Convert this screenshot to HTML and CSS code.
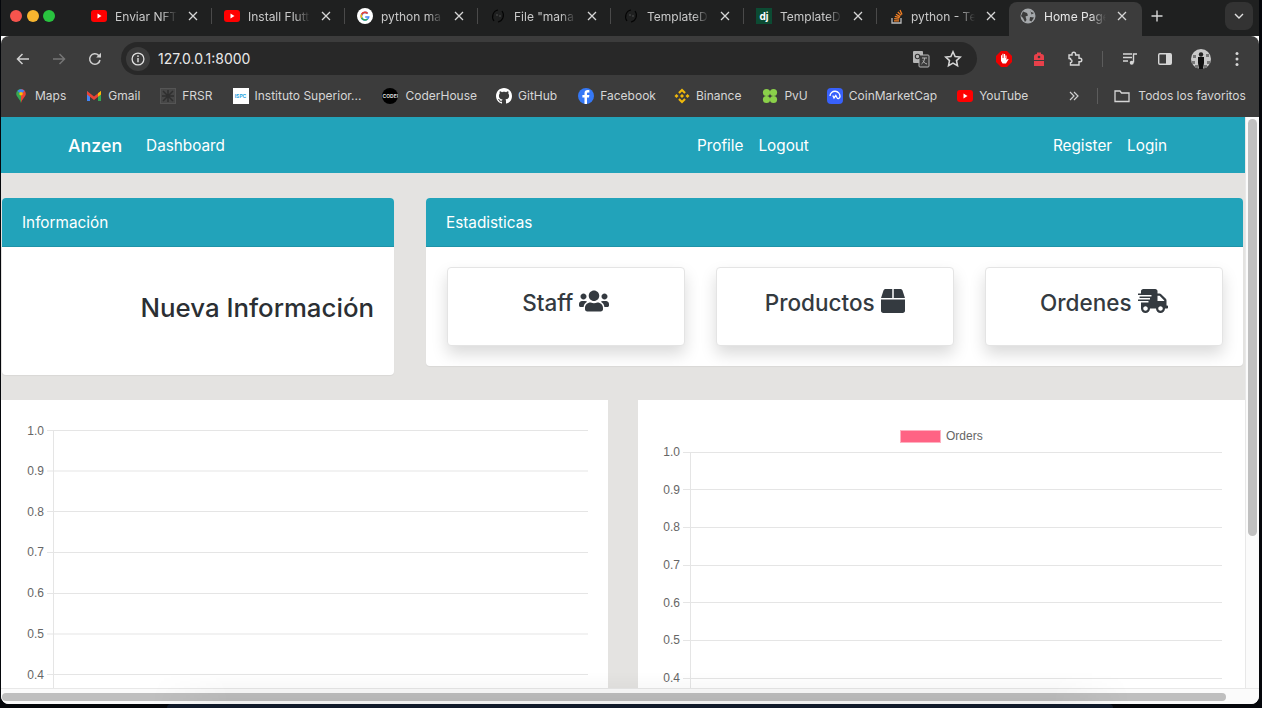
FILE: index.html
```html
<!DOCTYPE html>
<html lang="es">
<head>
    <meta charset="UTF-8">
    <title>Home Page</title>
    <link rel="stylesheet" href="styles.css">
</head>
<body>

<svg class="defs" width="0" height="0">
    <symbol id="yt" viewBox="0 0 16 16"><rect y="2" width="16" height="12" rx="3" fill="#f00"/><path d="M6.5 5.5l4 2.5-4 2.5z" fill="#fff"/></symbol>
    <symbol id="x" viewBox="0 0 10 10"><path d="M1 1l8 8M9 1l-8 8" stroke="#d6d6d6" stroke-width="1.3" fill="none"/></symbol>
    <symbol id="ring" viewBox="0 0 16 16"><path d="M4 13C1 9 3 3 8 2M12 3c3 4 1 10-4 11" stroke="#050505" stroke-width="1.2" fill="none"/><circle cx="7" cy="7" r=".8" fill="#555"/><circle cx="10" cy="8" r=".8" fill="#555"/></symbol>
</svg>

<div class="window">

    <div class="tabstrip">
        <div class="lights">
            <span class="light red"></span>
            <span class="light yellow"></span>
            <span class="light green"></span>
        </div>
        <div class="tab">
            <svg class="fav"><use href="#yt"/></svg>
            <span class="tab-title">Enviar NFT</span>
            <svg class="tab-x"><use href="#x"/></svg>
        </div>
        <div class="tab">
            <svg class="fav"><use href="#yt"/></svg>
            <span class="tab-title">Install Flutt</span>
            <svg class="tab-x"><use href="#x"/></svg>
        </div>
        <div class="tab">
            <svg class="fav" viewBox="0 0 16 16"><circle cx="8" cy="8" r="8" fill="#fff"/><path d="M12.6 8.2H8.2v1.6h2.6a2.9 2.9 0 1 1-.8-3.7l1.2-1.2A4.6 4.6 0 1 0 12.6 8.2z" fill="#4285f4"/><path d="M3.9 6l1.4 1a2.9 2.9 0 0 1 4.7-.9l1.2-1.2A4.6 4.6 0 0 0 3.9 6z" fill="#ea4335"/><path d="M3.9 10.2l1.4-1a2.9 2.9 0 0 0 4.4 1.4l1.1 1.1a4.6 4.6 0 0 1-6.9-1.5z" fill="#34a853"/><path d="M3.9 6a4.6 4.6 0 0 0 0 4.2l1.4-1a2.9 2.9 0 0 1 0-2.2z" fill="#fbbc05"/></svg>
            <span class="tab-title">python ma</span>
            <svg class="tab-x"><use href="#x"/></svg>
        </div>
        <div class="tab">
            <svg class="fav"><use href="#ring"/></svg>
            <span class="tab-title">File "mana</span>
            <svg class="tab-x"><use href="#x"/></svg>
        </div>
        <div class="tab">
            <svg class="fav"><use href="#ring"/></svg>
            <span class="tab-title">TemplateD</span>
            <svg class="tab-x"><use href="#x"/></svg>
        </div>
        <div class="tab">
            <span class="fav dj">dj</span>
            <span class="tab-title">TemplateD</span>
            <svg class="tab-x"><use href="#x"/></svg>
        </div>
        <div class="tab tab-so">
            <svg class="fav" viewBox="0 0 16 16"><path d="M3 10v5h9v-5" stroke="#bcbbbb" stroke-width="1.3" fill="none"/><path d="M5 12.8h5M5.2 10.6l5 .5M5.8 8.4l4.8 1.3M7 6.2l4.2 2.4M8.8 4l3.4 3.4M11 2l2 4.4" stroke="#f48024" stroke-width="1.3" fill="none"/></svg>
            <span class="tab-title">python - Te</span>
            <svg class="tab-x"><use href="#x"/></svg>
        </div>
        <div class="tab active">
            <svg class="fav" viewBox="0 0 16 16"><circle cx="8" cy="8" r="7.5" fill="#a5a8ab"/><path d="M3 3.5l4 1.5 1 2.5-2.5 1 1 3.5-1.5 2-2-4-2-2zM10 1.5l1 2.5 3 1-2.5 1.5zM10 9l4 .5-2.5 4-2-1z" fill="#3c3c3c"/></svg>
            <span class="tab-title">Home Page</span>
            <svg class="tab-x"><use href="#x"/></svg>
        </div>
        <svg class="new-tab" viewBox="0 0 12 12"><path d="M6 .5v11M.5 6h11" stroke="#d6d6d6" stroke-width="1.4"/></svg>
        <div class="tab-menu">
            <svg width="10" height="6" viewBox="0 0 10 6"><path d="M1 1l4 4 4-4" stroke="#e0e0e0" stroke-width="1.4" fill="none"/></svg>
        </div>
    </div>

    <div class="toolbar">
        <svg class="tool-icon" viewBox="0 0 16 16"><path d="M14 8H2.5M7.5 3l-5 5 5 5" stroke="#d0d0d0" stroke-width="1.5" fill="none"/></svg>
        <svg class="tool-icon" viewBox="0 0 16 16"><path d="M2 8h11.5M8.5 3l5 5-5 5" stroke="#757575" stroke-width="1.5" fill="none"/></svg>
        <svg class="tool-icon" viewBox="0 0 16 16"><path d="M13 9a5.2 5.2 0 1 1-1.4-4.6L13.5 6" stroke="#d0d0d0" stroke-width="1.5" fill="none"/><path d="M14 1.8V6.6H9.2z" fill="#d0d0d0"/></svg>
        <div class="address">
            <span class="info-chip">
                <svg width="14" height="14" viewBox="0 0 14 14"><circle cx="7" cy="7" r="5.9" stroke="#e0e0e0" stroke-width="1.3" fill="none"/><path d="M7 6v4.2" stroke="#e0e0e0" stroke-width="1.4"/><circle cx="7" cy="4.1" r=".9" fill="#e0e0e0"/></svg>
            </span>
            <span class="url">127.0.0.1:8000</span>
            <svg class="addr-icon translate" viewBox="0 0 18 18"><rect x="1" y="1" width="10" height="12" rx="1" fill="#b5b5b5"/><rect x="7" y="5" width="10" height="12" rx="1" fill="#3a3a3a" stroke="#b5b5b5"/><path d="M10 8h5M12.5 8c0 3-1.5 5-3 6M11 10.5c1 2 2 3 4 3.5" stroke="#b5b5b5" fill="none"/><circle cx="5.5" cy="6.5" r="2.2" stroke="#333" stroke-width="1.1" fill="none"/></svg>
            <svg class="addr-icon star" viewBox="0 0 16 16"><path d="M8 1.6l1.9 4.2 4.6.5-3.4 3.1.9 4.6L8 11.7l-4 2.3.9-4.6L1.5 6.3l4.6-.5z" stroke="#d6d6d6" stroke-width="1.4" fill="none"/></svg>
        </div>
        <svg class="ext ext-shield" viewBox="0 0 16 16"><path d="M5 0h6l5 5v6l-5 5H5l-5-5V5z" fill="#e00"/><path d="M5 8V4.2h1V7h.4V2.8h1.1V7H8V3h1.1v4h.4V4.4h1V9l1.3-1.3.8.6L10 12.5H6.6L5 10z" fill="#fff"/></svg>
        <svg class="ext ext-pack" viewBox="0 0 16 16"><path d="M6 3V1.5h4V3h.5A2.5 2.5 0 0 1 13 5.5V9H3V5.5A2.5 2.5 0 0 1 5.5 3z" fill="#e8404a"/><rect x="3" y="10" width="10" height="5" fill="#e8404a"/><circle cx="8" cy="6" r="1.3" fill="#3c3c3c"/></svg>
        <svg class="ext ext-puzzle" viewBox="0 0 16 16"><path d="M2 4h3V3a1.8 1.8 0 0 1 3.6 0v1H12v3.2h1a1.8 1.8 0 0 1 0 3.6h-1V14H3.5v-2.4a1.5 1.5 0 0 0 0-3V7.5H2z" stroke="#d6d6d6" stroke-width="1.4" fill="none"/></svg>
        <span class="tool-sep"></span>
        <svg class="ext ext-music" viewBox="0 0 16 16"><path d="M1 3h9M1 6.5h9M1 10h5" stroke="#d6d6d6" stroke-width="1.4"/><path d="M11.5 11.5V3H15" stroke="#d6d6d6" stroke-width="1.4" fill="none"/><circle cx="9.7" cy="11.7" r="2" fill="#d6d6d6"/></svg>
        <svg class="ext ext-panel" viewBox="0 0 16 16"><rect x="1.7" y="2.7" width="12.6" height="10.6" rx="1.2" stroke="#d6d6d6" stroke-width="1.4" fill="none"/><rect x="9" y="3" width="5" height="10" fill="#d6d6d6"/></svg>
        <svg class="ext ext-avatar" viewBox="0 0 20 20"><circle cx="10" cy="10" r="10" fill="#c9c9c9"/><path d="M2 6h3v3H2zM15 5h3v3h-3zM1 12h3v3H1zM16 12h3v3h-3zM4 16h3v3H4zM13 16h3v3h-3z" fill="#777"/><path d="M7 8h6v6l-1 6H8l-1-6z" fill="#111"/><circle cx="10" cy="5.5" r="2.2" fill="#222"/></svg>
        <svg class="ext ext-dots" viewBox="0 0 4 16"><circle cx="2" cy="2.5" r="1.5" fill="#d6d6d6"/><circle cx="2" cy="8" r="1.5" fill="#d6d6d6"/><circle cx="2" cy="13.5" r="1.5" fill="#d6d6d6"/></svg>
    </div>

    <div class="bookmarks">
        <span class="bm bm-maps">
            <svg class="bm-icon" viewBox="0 0 16 16"><path d="M8 0a5.5 5.5 0 0 1 5.5 5.5C13.500 9 9.500 11 8 16z" fill="#ea4335"/><path d="M8 0a5.500 5.500 0 0 0-5.500 5.500C2.500 9 6.500 11 8 16z" fill="#34a853"/><path d="M4 2a5.500 5.500 0 0 1 8 0L8 6z" fill="#4285f4"/><circle cx="8" cy="5.500" r="2" fill="#fbbc05"/></svg>
            Maps
        </span>
        <span class="bm bm-gmail">
            <svg class="bm-icon" viewBox="0 0 16 16"><path d="M1 3v10h3V7z" fill="#4285f4"/><path d="M15 3v10h-3V7z" fill="#34a853"/><path d="M1 3l7 5.500L15 3v3.500L8 12 1 6.500z" fill="#ea4335"/><path d="M12 5.300L15 3v3.500L12 8.500z" fill="#fbbc05"/></svg>
            Gmail
        </span>
        <span class="bm bm-frsr">
            <svg class="bm-icon" viewBox="0 0 16 16"><rect x=".5" y=".5" width="15" height="15" fill="#474747" stroke="#555"/><path d="M3 3l10 10M13 3L3 13M8 2v12M2 8h12" stroke="#2f2f2f" stroke-width="1.500"/></svg>
            FRSR
        </span>
        <span class="bm bm-ispc">
            <span class="bm-icon ispc">ISPC</span>
            Instituto Superior...
        </span>
        <span class="bm bm-coder">
            <span class="bm-icon coder">CODER</span>
            CoderHouse
        </span>
        <span class="bm bm-github">
            <svg class="bm-icon" viewBox="0 0 16 16"><path fill="#fff" d="M8 0C3.58 0 0 3.58 0 8c0 3.54 2.29 6.530 5.470 7.590.4.070.55-.17.55-.38 0-.19-.01-.82-.01-1.490-2.010.37-2.530-.49-2.690-.94-.09-.23-.48-.94-.82-1.130-.28-.15-.68-.52-.01-.53.63-.01 1.080.58 1.230.82.720 1.210 1.870.87 2.330.66.070-.52.280-.87.510-1.070-1.780-.2-3.640-.89-3.640-3.950 0-.87.310-1.590.820-2.150-.08-.2-.36-1.020.08-2.120 0 0 .67-.21 2.200.82.640-.18 1.320-.27 2-.27s1.360.09 2 .27c1.530-1.040 2.200-.82 2.200-.82.440 1.100.160 1.920.080 2.120.510.560.820 1.270.820 2.150 0 3.070-1.870 3.750-3.650 3.950.290.250.540.730.540 1.480 0 1.070-.01 1.930-.01 2.200 0 .21.150.46.550.38A8.010 8.010 0 0 0 16 8c0-4.420-3.580-8-8-8z"/></svg>
            GitHub
        </span>
        <span class="bm bm-fb">
            <svg class="bm-icon" viewBox="0 0 16 16"><circle cx="8" cy="8" r="8" fill="#3578f6"/><path d="M9 16V9.500h2l.4-2.500H9V5.600c0-.8.3-1.200 1.200-1.200h1.200V2.200C11 2.100 10.300 2 9.700 2 7.800 2 6.500 3.200 6.500 5.200V7H4.400v2.500h2.100V16z" fill="#fff"/></svg>
            Facebook
        </span>
        <span class="bm bm-binance">
            <svg class="bm-icon" viewBox="0 0 16 16"><path d="M8 .5l3.800 3.800-1.500 1.500L8 3.500 5.700 5.800 4.200 4.300zM.5 8l2-2 2 2-2 2zM11.500 8l2-2 2 2-2 2zM8 6l2 2-2 2-2-2zM8 15.500l-3.800-3.800 1.500-1.500L8 12.500l2.300-2.300 1.500 1.500z" fill="#f0b90b"/></svg>
            Binance
        </span>
        <span class="bm bm-pvu">
            <svg class="bm-icon" viewBox="0 0 16 16"><circle cx="4.500" cy="4.500" r="3.600" fill="#8bd14a"/><circle cx="11.500" cy="4.500" r="3.600" fill="#8bd14a"/><circle cx="4.500" cy="11.500" r="3.600" fill="#8bd14a"/><circle cx="11.500" cy="11.500" r="3.600" fill="#8bd14a"/></svg>
            PvU
        </span>
        <span class="bm bm-cmc">
            <svg class="bm-icon" viewBox="0 0 16 16"><rect width="16" height="16" rx="4" fill="#3861fb"/><path d="M3 8a5 5 0 1 1 10 .5c0 2-2.200 2.800-3 1.200L8.800 7.500 7 10 5.800 7.500" stroke="#fff" stroke-width="1.300" fill="none"/></svg>
            CoinMarketCap
        </span>
        <span class="bm bm-yt">
            <svg class="bm-icon"><use href="#yt"/></svg>
            YouTube
        </span>
        <span class="bm-more">
            <svg width="10" height="10" viewBox="0 0 10 10"><path d="M1 1l4 4-4 4M5 1l4 4-4 4" stroke="#d0d0d0" stroke-width="1.200" fill="none"/></svg>
        </span>
        <span class="bm-sep"></span>
        <span class="bm bm-all">
            <svg class="bm-icon" viewBox="0 0 16 16"><path d="M1 13.500V3h5l1.500 2H15v8.500z" stroke="#d6d6d6" stroke-width="1.300" fill="none"/></svg>
            Todos los favoritos
        </span>
    </div>

    <div class="browser-body">
        <div class="viewport">
            <nav class="navbar">
                <a class="brand">Anzen</a>
                <a class="nav-link">Dashboard</a>
                <div class="nav-group nav-center">
                    <a class="nav-link">Profile</a>
                    <a class="nav-link">Logout</a>
                </div>
                <div class="nav-group nav-right">
                    <a class="nav-link">Register</a>
                    <a class="nav-link">Login</a>
                </div>
            </nav>

            <div class="top-row">
                <section class="card card-info">
                    <header class="card-header">Información</header>
                    <div class="card-body info-body">
                        <h3 class="info-title">Nueva Información</h3>
                    </div>
                </section>

                <section class="card">
                    <header class="card-header">Estadisticas</header>
                    <div class="card-body stats-body">
                        <div class="stat">
                            Staff
                            <svg class="stat-icon users" viewBox="0 0 640 512"><path d="M96 224c35.300 0 64-28.700 64-64s-28.700-64-64-64-64 28.700-64 64 28.700 64 64 64zm448 0c35.300 0 64-28.700 64-64s-28.700-64-64-64-64 28.700-64 64 28.700 64 64 64zm32 32h-64c-17.600 0-33.500 7.100-45.100 18.600 40.300 22.100 68.900 62 75.100 109.400h66c17.700 0 32-14.300 32-32v-32c0-35.300-28.700-64-64-64zm-256 0c61.900 0 112-50.100 112-112S381.900 32 320 32 208 82.100 208 144s50.100 112 112 112zm76.800 32h-8.300c-20.800 10-43.900 16-68.500 16s-47.600-6-68.500-16h-8.300C179.600 288 128 339.600 128 403.200V432c0 26.500 21.500 48 48 48h288c26.500 0 48-21.500 48-48v-28.800c0-63.600-51.600-115.200-115.200-115.200zm-223.700-13.400C161.500 263.100 145.600 256 128 256H64c-35.300 0-64 28.700-64 64v32c0 17.700 14.300 32 32 32h65.900c6.300-47.400 34.900-87.300 75.200-109.400z"/></svg>
                        </div>
                        <div class="stat">
                            Productos
                            <svg class="stat-icon box" viewBox="0 0 512 512"><path d="M509.500 184.600L458.900 32.800C452.400 13.200 434.100 0 413.400 0H272v192h238.700c-.4-2.500-.4-5-1.200-7.400zM240 0H98.600c-20.700 0-39 13.200-45.500 32.800L2.500 184.600c-.8 2.400-.8 4.900-1.200 7.400H240V0zM0 224v240c0 26.500 21.500 48 48 48h416c26.500 0 48-21.500 48-48V224H0z"/></svg>
                        </div>
                        <div class="stat">
                            Ordenes
                            <svg class="stat-icon truck" viewBox="0 0 640 512"><path d="M624 352h-16V243.900c0-12.700-5.100-24.900-14.100-33.900L494 110.100c-9-9-21.200-14.100-33.900-14.100H416V48c0-26.500-21.500-48-48-48H112C85.500 0 64 21.500 64 48v48H8c-4.400 0-8 3.600-8 8v16c0 4.400 3.600 8 8 8h272c4.400 0 8 3.600 8 8v16c0 4.400-3.600 8-8 8H40c-4.400 0-8 3.600-8 8v16c0 4.400 3.600 8 8 8h208c4.400 0 8 3.600 8 8v16c0 4.400-3.600 8-8 8H8c-4.400 0-8 3.600-8 8v16c0 4.400 3.600 8 8 8h208c4.400 0 8 3.600 8 8v16c0 4.400-3.600 8-8 8H64v128c0 53 43 96 96 96s96-43 96-96h128c0 53 43 96 96 96s96-43 96-96h48c8.800 0 16-7.200 16-16v-32c0-8.800-7.200-16-16-16zM160 464c-26.500 0-48-21.500-48-48s21.500-48 48-48 48 21.500 48 48-21.500 48-48 48zm320 0c-26.500 0-48-21.500-48-48s21.500-48 48-48 48 21.500 48 48-21.500 48-48 48zm80-208H416V144h44.100l99.900 99.900V256z"/></svg>
                        </div>
                    </div>
                </section>
            </div>

            <div class="chart-row">
                <div class="chart-panel">
                    <svg class="chart" width="607" height="300" viewBox="0 0 607 300">
                        <g class="grid">
                            <path d="M46 30.500H587M46 71H587M46 111.500H587M46 152.500H587M46 193.500H587M46 234H587M46 274.500H587M52.500 30V300"/>
                        </g>
                        <g class="ticks">
                            <text x="43" y="34.500">1.0</text>
                            <text x="43" y="75">0.9</text>
                            <text x="43" y="116">0.8</text>
                            <text x="43" y="156">0.7</text>
                            <text x="43" y="197">0.6</text>
                            <text x="43" y="238">0.5</text>
                            <text x="43" y="279">0.4</text>
                        </g>
                    </svg>
                </div>
                <div class="chart-panel">
                    <svg class="chart" width="607" height="300" viewBox="0 0 607 300">
                        <rect class="legend-box" x="262.500" y="30.500" width="40" height="12"/>
                        <text class="legend-text" x="308" y="40">Orders</text>
                        <g class="grid">
                            <path d="M45 52.500H584M45 89.500H584M45 127.500H584M45 165.500H584M45 202.500H584M45 240.500H584M45 278.500H584M52.500 52V300"/>
                        </g>
                        <g class="ticks">
                            <text x="42" y="55.500">1.0</text>
                            <text x="42" y="94">0.9</text>
                            <text x="42" y="131">0.8</text>
                            <text x="42" y="169">0.7</text>
                            <text x="42" y="207">0.6</text>
                            <text x="42" y="244">0.5</text>
                            <text x="42" y="282">0.4</text>
                        </g>
                    </svg>
                </div>
            </div>
        </div>
        <div class="vscroll"><span class="vthumb"></span></div>
    </div>

    <div class="hscroll"><span class="hthumb"></span></div>
    <div class="dock-shadow"></div>
</div>

<div class="dock"></div>

</body>
</html>
```

FILE: styles.css
```css
* {
    box-sizing: border-box;
}

html, body {
    height: 100%;
}

body {
    margin: 0;
    overflow: hidden;
    background: #05070b;
    font-family: "Inter", "Liberation Sans", sans-serif;
}

.defs {
    display: block;
    height: 0;
}

.window {
    position: relative;
    width: 1258px;
    height: 704px;
    margin-left: 1px;
    overflow: hidden;
    border-radius: 0 0 8px 8px;
    background: #fbfbfb;
}

.dock {
    width: 946px;
    height: 4px;
    margin-left: 167px;
    border-radius: 4px 4px 0 0;
    background: #101a2a;
}

/* tabs */

.tabstrip {
    display: flex;
    align-items: flex-start;
    height: 36px;
    background: #1f2020;
}

.lights {
    display: flex;
    gap: 4.500px;
    width: 77px;
    margin-top: 10px;
    padding-left: 9px;
}

.light {
    width: 12px;
    height: 12px;
    border-radius: 50%;
}

.red { background: #f5544d; }
.yellow { background: #f7b52f; }
.green { background: #29c33f; }

.tab {
    display: flex;
    align-items: center;
    width: 133px;
    height: 34px;
    margin-top: 2px;
    padding: 0 0 6px 13px;
    color: #c9c9c9;
    font-size: 12px;
    position: relative;
}

.tab::after {
    content: "";
    position: absolute;
    right: -1px;
    top: 6px;
    width: 1px;
    height: 16px;
    background: #4a4a4a;
}

.tab-so::after,
.tab.active::after {
    display: none;
}

.tab.active {
    padding-left: 11px;
    border-radius: 8px 8px 0 0;
    background: #3c3c3c;
    color: #e8e8e8;
}

.fav {
    flex: none;
    width: 16px;
    height: 16px;
    margin-right: 8px;
}

.tab-so .fav {
    margin-right: 6px;
}

.tab-so .tab-title {
    width: 64px;
}

.dj {
    display: block;
    background: #0c4b33;
    color: #fff;
    font-size: 10px;
    font-weight: 700;
    line-height: 16px;
    text-align: center;
}

.tab-title {
    flex: none;
    width: 62px;
    overflow: hidden;
    white-space: nowrap;
    -webkit-mask-image: linear-gradient(to right, #000 75%, transparent);
    mask-image: linear-gradient(to right, #000 75%, transparent);
}

.tab-x {
    flex: none;
    width: 10px;
    height: 10px;
    margin-left: 11px;
}

.new-tab {
    width: 12px;
    height: 12px;
    margin-top: 10px;
    margin-left: 9px;
}

.tab-menu {
    display: flex;
    align-items: center;
    justify-content: center;
    width: 28px;
    height: 28px;
    margin-top: 2px;
    margin-left: 62px;
    border-radius: 8px;
    background: #333;
}

/* toolbar */

.toolbar {
    display: flex;
    align-items: center;
    height: 45px;
    padding-left: 14px;
    background: #3c3c3c;
    border-radius: 8px 8px 0 0;
}

.tool-icon {
    width: 16px;
    height: 16px;
    margin-right: 20px;
}

.tool-icon:nth-child(3) {
    margin-right: 18px;
}

.address {
    display: flex;
    align-items: center;
    width: 856px;
    height: 33px;
    padding-left: 5px;
    border-radius: 17px;
    background: #282828;
}

.info-chip {
    display: flex;
    align-items: center;
    justify-content: center;
    width: 24px;
    height: 24px;
    border-radius: 50%;
    background: #3c3c3c;
}

.url {
    margin-left: 8px;
    color: #e8e8e8;
    font-size: 14px;
}

.addr-icon {
    width: 18px;
    height: 18px;
}

.translate {
    margin-left: auto;
}

.star {
    margin-left: 14px;
    margin-right: 15px;
}

.ext {
    flex: none;
    width: 16px;
    height: 16px;
}

.ext-shield { margin-left: 19px; }
.ext-pack { margin-left: 19px; }
.ext-puzzle { margin-left: 20px; }
.ext-music { margin-left: 19px; }
.ext-panel { margin-left: 19px; }
.ext-avatar { width: 20px; height: 20px; margin-left: 18px; }
.ext-dots { width: 4px; margin-left: 24px; }

.tool-sep {
    width: 1px;
    height: 16px;
    margin-left: 19px;
    background: #5c5c5c;
}

/* bookmarks */

.bookmarks {
    display: flex;
    align-items: center;
    height: 36px;
    padding: 0 0 7px 13px;
    background: #3c3c3c;
    color: #d6d6d6;
    font-size: 12px;
    white-space: nowrap;
}

.bm {
    display: flex;
    align-items: center;
    gap: 6px;
    margin-right: 20px;
}

.bm-icon {
    flex: none;
    width: 16px;
    height: 16px;
}

.bm-maps .bm-icon { width: 14px; margin-right: 1px; }

.bm-coder { margin-left: 1px; margin-right: 19px; gap: 7px; }
.bm-github { margin-right: 21px; }
.bm-fb { margin-right: 18px; }
.bm-binance { margin-right: 21px; }
.bm-pvu { margin-right: 19px; }

.ispc {
    background: #fff;
    color: #2aa5e0;
    font-size: 5px;
    font-weight: 700;
    line-height: 16px;
    text-align: center;
}

.coder {
    overflow: hidden;
    border-radius: 50%;
    background: #000;
    color: #ddd;
    font-size: 5px;
    font-weight: 700;
    line-height: 16px;
    text-align: center;
}

.bm-more {
    display: flex;
    margin-left: 21px;
}

.bm-sep {
    width: 1px;
    height: 16px;
    margin-left: 18px;
    margin-right: 16px;
    background: #5c5c5c;
}

.bm-all {
    margin-right: 0;
    gap: 8px;
}

/* page */

.browser-body {
    display: flex;
    height: 571px;
}

.viewport {
    width: 1244px;
    height: 571px;
    overflow: hidden;
    background: #e4e3e1;
    color: #343a40;
}

.vscroll {
    flex: 1;
    padding: 2px 2px 0 2px;
    background: #fbfbfb;
    border-left: 1px solid #e8e8e8;
}

.vthumb {
    display: block;
    width: 9px;
    height: 417px;
    border-radius: 5px;
    background: #c0c0c0;
}

.hscroll {
    height: 17px;
    padding: 4px 0 0 1px;
    background: #fbfbfb;
    border-top: 1px solid #e8e8e8;
}

.hthumb {
    display: block;
    width: 1224px;
    height: 8px;
    border-radius: 4px;
    background: #bfbfbf;
}

.dock-shadow {
    position: absolute;
    left: 150px;
    bottom: 0;
    width: 980px;
    height: 32px;
    background: linear-gradient(to bottom, transparent, rgba(0, 0, 0, 0.05));
    -webkit-mask-image: linear-gradient(to right, transparent, #000 8%, #000 92%, transparent);
    mask-image: linear-gradient(to right, transparent, #000 8%, #000 92%, transparent);
}

.navbar {
    display: flex;
    align-items: center;
    height: 56px;
    padding-left: 67px;
    background: #22a3ba;
    color: #fff;
    font-size: 15.300px;
}

.brand {
    margin-right: 24px;
    font-size: 17.800px;
    font-weight: 500;
}

.nav-group {
    display: flex;
    gap: 15px;
}

.nav-center {
    margin-left: 472px;
}

.nav-right {
    margin-left: 244px;
}

.top-row {
    display: grid;
    grid-template-columns: 392px 817px;
    column-gap: 32px;
    align-items: start;
    padding: 25px 0 0 1px;
}

.card {
    border-radius: 4px;
    background: #fff;
    box-shadow: 0 1px 1px rgba(0, 0, 0, 0.05);
    overflow: hidden;
}

.card-header {
    height: 49px;
    padding-left: 20px;
    background: #22a3ba;
    border-bottom: 1px solid #1f93a8;
    color: #fff;
    font-size: 15.300px;
    line-height: 50px;
}

.info-body {
    height: 128px;
    padding: 45px 20px 0 0;
}

.info-title {
    margin: 0;
    color: #2b2f33;
    font-size: 25.800px;
    font-weight: 500;
    line-height: 32px;
    text-align: right;
}

.stats-body {
    display: grid;
    grid-template-columns: repeat(3, 238.500px);
    column-gap: 30.500px;
    height: 119px;
    padding: 20px 0 0 20.500px;
}

.stat {
    height: 79px;
    padding-top: 21px;
    border: 1px solid #e4e4e4;
    border-radius: 4px;
    background: #fff;
    box-shadow: 0 8px 16px rgba(0, 0, 0, 0.15);
    font-size: 22.500px;
    font-weight: 500;
    line-height: 28px;
    text-align: center;
}

.stat-icon {
    height: 24px;
    fill: #343a40;
    vertical-align: -2px;
}

.users { width: 30px; }
.box { width: 24px; }
.truck { width: 30px; }

.chart-row {
    display: grid;
    grid-template-columns: 607px 607px;
    column-gap: 30px;
    margin-top: 25px;
}

.chart-panel {
    height: 300px;
    background: #fff;
}

.chart {
    display: block;
}

.grid path {
    fill: none;
    stroke: #e5e5e5;
    stroke-width: 1;
}

.ticks text {
    fill: #666;
    font-family: "Liberation Sans", sans-serif;
    font-size: 12px;
    text-anchor: end;
}

.legend-box {
    fill: #ff6384;
    stroke: #ffb1c1;
    stroke-width: 1;
}

.legend-text {
    fill: #666;
    font-family: "Liberation Sans", sans-serif;
    font-size: 12px;
}
```
